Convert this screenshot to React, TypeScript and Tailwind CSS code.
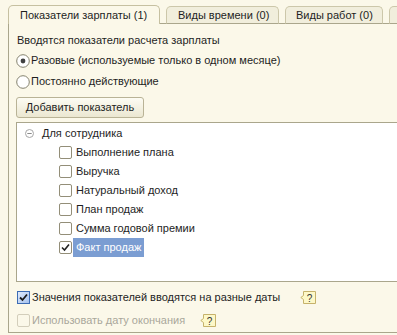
import React from "react";

const F = { fontFamily: '"Liberation Sans", Arial, sans-serif' };

function Radio({ checked }: { checked?: boolean }) {
  return (
    <svg width="14" height="14" viewBox="0 0 14 14" className="shrink-0">
      <circle cx="7" cy="7" r="6.3" fill="#ffffff" stroke="#85826f" />
      {checked && <circle cx="7" cy="7" r="2.4" fill="#404040" />}
    </svg>
  );
}

function Check({ checked }: { checked?: boolean }) {
  return (
    <div className="w-[13px] h-[13px] shrink-0 rounded-[2px] border border-[#938e78] bg-white flex items-center justify-center">
      {checked && (
        <svg width="9" height="9" viewBox="0 0 9 9">
          <path d="M1 4.5 L3.5 7 L8 1.5" fill="none" stroke="#222" strokeWidth="1.6" />
        </svg>
      )}
    </div>
  );
}

function Help() {
  return (
    <svg width="16" height="13" viewBox="0 0 16 13" className="shrink-0">
      <path d="M3.5 0.5 H15.5 V12.5 H3.5 V8.5 L0.8 6.5 L3.5 4.5 Z" fill="#fdf8c8" stroke="#c6b26b" />
      <text x="9.5" y="10.5" textAnchor="middle" fontSize="10" fill="#333" style={F}>?</text>
    </svg>
  );
}

export default function App() {
  const items = [
    "Выполнение плана",
    "Выручка",
    "Натуральный доход",
    "План продаж",
    "Сумма годовой премии",
    "Факт продаж",
  ];
  return (
    <div className="w-[397px] h-[335px] bg-[#fbf8e9] overflow-hidden text-[11px] leading-[13px] text-[#1e1e1e] flex flex-col" style={F}>
      <div className="flex items-end pt-[5px] pl-[8px] h-[24px] shrink-0">
        <div className="h-[19px] w-[152px] shrink-0 px-[11px] flex items-center border border-b-0 border-[#c6c0a1] rounded-t-[5px] bg-[#fbf8e9] whitespace-nowrap">
          Показатели зарплаты (1)
        </div>
        <div className="w-[6px] shrink-0 h-full border-b border-[#aaa68c]" />
        <div className="h-[18px] w-[113px] shrink-0 px-[11px] flex items-center border border-[#ccc7aa] border-b-[#aaa68c] rounded-t-[5px] bg-[#f1eedc] whitespace-nowrap">
          Виды времени (0)
        </div>
        <div className="w-[6px] shrink-0 h-full border-b border-[#aaa68c]" />
        <div className="h-[18px] w-[98px] shrink-0 px-[10px] flex items-center border border-[#ccc7aa] border-b-[#aaa68c] rounded-t-[5px] bg-[#f1eedc] whitespace-nowrap">
          Виды работ (0)
        </div>
        <div className="w-[6px] shrink-0 h-full border-b border-[#aaa68c]" />
        <div className="h-[18px] w-[40px] shrink-0 border border-[#ccc7aa] border-b-[#aaa68c] rounded-t-[5px] bg-[#f1eedc]" />
      </div>
      <div className="ml-[8px] h-[309px] border-l border-b border-[#aaa68c] flex flex-col pl-[7px] pt-[8px] shrink-0">
        <div className="h-[16px] flex items-center whitespace-nowrap pl-[1px]">Вводятся показатели расчета зарплаты</div>
        <div className="h-[21px] mt-[2px] flex items-center gap-[1px] whitespace-nowrap">
          <Radio checked />
          <span>Разовые (используемые только в одном месяце)</span>
        </div>
        <div className="h-[21px] flex items-center gap-[1px] whitespace-nowrap">
          <Radio />
          <span>Постоянно действующие</span>
        </div>
        <div className="mt-[5px] w-[128px] h-[21px] rounded-[3px] border border-[#b9b396] bg-gradient-to-b from-[#fdfcf4] to-[#ebe7d1] flex items-center justify-center whitespace-nowrap">
          Добавить показатель
        </div>
        <div className="mt-[4px] h-[160px] bg-white border-l border-t border-b border-[#aaa68c] pt-[1px]">
          <div className="h-[19px] flex items-center pl-[8px] whitespace-nowrap">
            <svg width="9" height="9" viewBox="0 0 9 9" className="shrink-0">
              <circle cx="4.5" cy="4.5" r="4" fill="#fff" stroke="#a6a6a6" />
              <path d="M2.3 4.5 H6.7" stroke="#8a8a8a" />
            </svg>
            <span className="ml-[8px]">Для сотрудника</span>
          </div>
          {items.map((t, i) => (
            <div key={t} className="h-[19px] flex items-center pl-[42px] whitespace-nowrap">
              <Check checked={i === 5} />
              <span className={i === 5 ? "ml-[1px] bg-[#7b9dd2] text-white px-[3px] h-[19px] flex items-center" : "ml-[1px] px-[3px]"}>{t}</span>
            </div>
          ))}
        </div>
        <div className="mt-[5px] h-[20px] flex items-center whitespace-nowrap pl-[1px]">
          <div className="w-[13px] h-[13px] shrink-0 border border-[#3d6cb4] bg-gradient-to-br from-[#dfeafb] to-[#a6c2ee] flex items-center justify-center">
            <svg width="9" height="9" viewBox="0 0 9 9">
              <path d="M1 4.5 L3.5 7 L8 1.5" fill="none" stroke="#1a1a1a" strokeWidth="1.8" />
            </svg>
          </div>
          <span className="ml-[2px] w-[268px] shrink-0">Значения показателей вводятся на разные даты</span>
          <Help />
        </div>
        <div className="mt-[3px] h-[20px] flex items-center whitespace-nowrap pl-[1px] text-[#a9a79b]">
          <div className="w-[13px] h-[13px] shrink-0 rounded-[2px] border border-[#d3cebb] bg-[#fbf8e9]" />
          <span className="ml-[2px] w-[168px] shrink-0">Использовать дату окончания</span>
          <Help />
        </div>
      </div>
    </div>
  );
}
